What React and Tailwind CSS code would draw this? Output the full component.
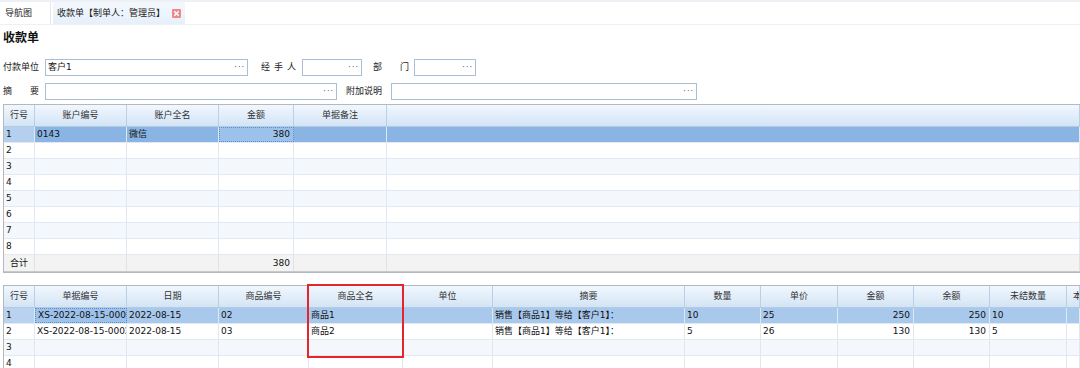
import React from 'react';

const font = { fontFamily: '"DejaVu Sans", "Noto Sans CJK SC", sans-serif' };

const cols1 = [
    { w: 31, h: '行号', k: 'no' },
    { w: 92, h: '账户编号', k: 'code' },
    { w: 92, h: '账户全名', k: 'name' },
    { w: 75, h: '金额', k: 'amt', right: true },
    { w: 93, h: '单据备注', k: 'memo' },
    { w: 0, h: '', k: 'rest' },
];

const rows1 = [
    { no: '1', code: '0143', name: '微信', amt: '380' },
    ...[2, 3, 4, 5, 6, 7, 8].map((n) => ({ no: String(n) })),
];

const cols2 = [
    { w: 31, h: '行号', k: 'no' },
    { w: 92, h: '单据编号', k: 'bill' },
    { w: 92, h: '日期', k: 'date' },
    { w: 90, h: '商品编号', k: 'code' },
    { w: 94, h: '商品全名', k: 'name' },
    { w: 90, h: '单位', k: 'unit' },
    { w: 192, h: '摘要', k: 'memo' },
    { w: 76, h: '数量', k: 'qty' },
    { w: 77, h: '单价', k: 'price' },
    { w: 76, h: '金额', k: 'amt', right: true },
    { w: 76, h: '余额', k: 'bal', right: true },
    { w: 77, h: '未结数量', k: 'open' },
    { w: 0, h: '本次结算', k: 'rest', left: true },
];

const rows2 = [
    { no: '1', bill: 'XS-2022-08-15-0001', date: '2022-08-15', code: '02', name: '商品1', memo: '销售【商品1】等给【客户1】：', qty: '10', price: '25', amt: '250', bal: '250', open: '10' },
    { no: '2', bill: 'XS-2022-08-15-0002', date: '2022-08-15', code: '03', name: '商品2', memo: '销售【商品1】等给【客户1】：', qty: '5', price: '26', amt: '130', bal: '130', open: '5' },
    { no: '3' },
    { no: '4' },
];

function Field({ w, value }) {
    return (
        <div className="h-[17px] border border-[#a9bfd6] bg-white flex items-center justify-between px-[2px]" style={{ width: w }}>
            <span className="text-[#111]">{value}</span>
            <span className="text-[#555] text-[8px] tracking-[1px] leading-none">···</span>
        </div>
    );
}

function Grid({ cols, rows, sel, selColor, selNo, focus, footer }) {
    return (
        <div className="ml-[3px] w-[1077px] border border-[#b4b9bf] border-r-0">
            <div className="flex h-[22px] bg-gradient-to-b from-[#f1f7fe] to-[#d3e4f5] border-b border-[#b3cbe2]">
                {cols.map((c, i) => (
                    <div
                        key={i}
                        className={`h-full flex items-center overflow-hidden whitespace-nowrap text-[#333] border-r border-[#b8cfe6] ${c.w ? 'shrink-0' : 'flex-1'} ${c.left ? 'justify-start pl-[6px]' : 'justify-center'}`}
                        style={c.w ? { width: c.w } : undefined}
                    >
                        {c.h}
                    </div>
                ))}
            </div>
            {rows.map((r, ri) => {
                const isSel = ri === sel;
                const bg = isSel ? selColor : ri % 2 === 0 ? 'bg-[#f4f8fc]' : 'bg-white';
                return (
                    <div key={ri} className={`flex h-[16px] border-b border-[#e1e9f2] ${bg}`}>
                        {cols.map((c, ci) => {
                            const f = isSel && focus === c.k;
                            const noCell = isSel && c.k === 'no' ? selNo : '';
                            return (
                                <div
                                    key={ci}
                                    className={`h-full flex items-center overflow-hidden whitespace-nowrap text-[#111] ${c.w ? 'shrink-0' : 'flex-1'} ${c.right ? 'justify-end pr-[3px]' : 'pl-[2px]'} ${f ? 'border border-dotted border-[#5b8fc9] bg-[#9cc1ea]' : 'border-r border-[#dfe8f2]'} ${noCell}`}
                                    style={c.w ? { width: c.w } : undefined}
                                >
                                    {r[c.k] || ''}
                                </div>
                            );
                        })}
                    </div>
                );
            })}
            {footer && (
                <div className="flex h-[17px] bg-[#f3f3f3] border-b border-[#c9c9c9]">
                    {cols.map((c, ci) => (
                        <div
                            key={ci}
                            className={`h-full flex items-center text-[#111] border-r border-[#e2e2e2] ${c.w ? 'shrink-0' : 'flex-1'} ${c.right ? 'justify-end pr-[3px]' : 'justify-center'}`}
                            style={c.w ? { width: c.w } : undefined}
                        >
                            {footer[c.k] || ''}
                        </div>
                    ))}
                </div>
            )}
        </div>
    );
}

export default function App() {
    return (
        <div className="w-[1080px] h-[368px] overflow-hidden bg-white text-[9px] leading-none" style={font}>
            <div className="h-[25px] border-t-2 border-[#3b8fe3] flex items-stretch border-b border-[#edf1f5]">
                <div className="w-[51px] flex items-center pl-[5px] text-[#222] border-r border-[#e6e9ec]">导航图</div>
                <div className="ml-[2px] w-[132px] flex items-center pl-[4px] text-[#222] bg-gradient-to-b from-[#f3f8fd] to-[#e6f0fa]">
                    <span>收款单【制单人：管理员】</span>
                    <svg width="9" height="9" viewBox="0 0 9 9" className="ml-[7px]">
                        <rect x="0" y="0" width="9" height="9" rx="1" fill="#ec8a8a" />
                        <path d="M2.3 2.3 L6.7 6.7 M6.7 2.3 L2.3 6.7" stroke="#fff" strokeWidth="1.5" />
                    </svg>
                </div>
            </div>
            <div className="h-[25px] flex items-center pl-[3px] text-[12px] font-bold text-[#111]">收款单</div>
            <div className="mt-[9px] flex items-center h-[17px]">
                <span className="w-[45px] pl-[3px] text-[#222]">付款单位</span>
                <Field w={203} value="客户1" />
                <span className="ml-[13px] w-[41px] text-[#222] tracking-[4px]">经手人</span>
                <Field w={60} value="" />
                <span className="ml-[11px] w-[41px] flex justify-between pr-[5px] text-[#222]"><span>部</span><span>门</span></span>
                <Field w={62} value="" />
            </div>
            <div className="mt-[7px] flex items-center h-[17px]">
                <span className="w-[45px] pl-[3px] pr-[6px] flex justify-between text-[#222]"><span>摘</span><span>要</span></span>
                <Field w={292} value="" />
                <span className="ml-[9px] w-[45px] text-[#222]">附加说明</span>
                <Field w={306} value="" />
            </div>
            <div className="mt-[4px]">
                <Grid cols={cols1} rows={rows1} sel={0} selColor="bg-[#89b4e4]" selNo="bg-[#b5d0ee]" focus="amt" footer={{ no: '合计', amt: '380' }} />
            </div>
            <div className="mt-[12px] relative">
                <Grid cols={cols2} rows={rows2} sel={0} selColor="bg-[#a8c8ec]" selNo="bg-[#b8d2ef]" focus="bill" />
                <div className="absolute left-[307px] top-[-1px] w-[97px] h-[74px] border-2 border-[#e5242c]" />
            </div>
        </div>
    );
}
